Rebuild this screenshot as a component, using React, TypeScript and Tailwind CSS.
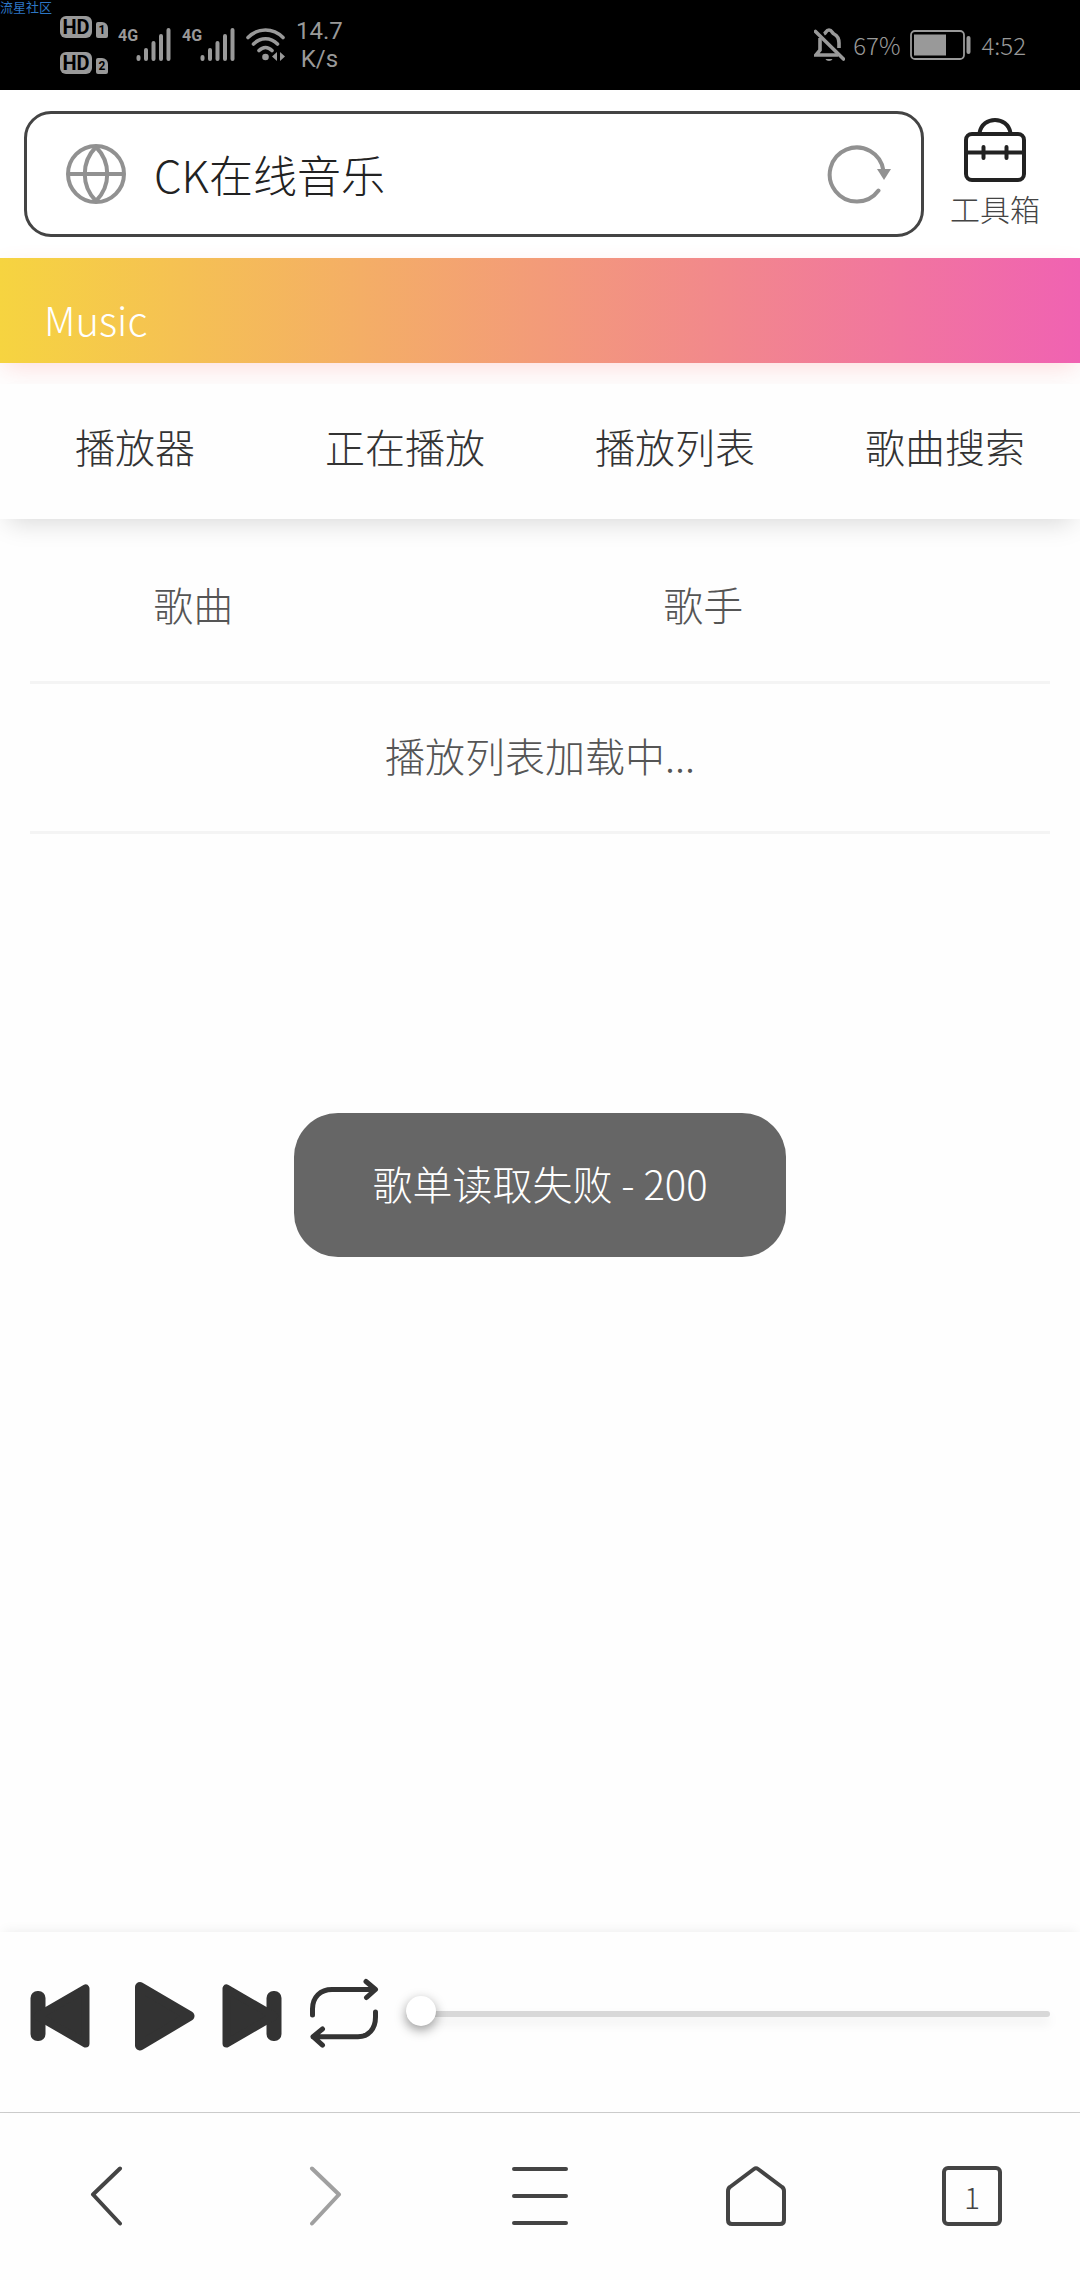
import { useState } from "react";

const tabs = ["播放器", "正在播放", "播放列表", "歌曲搜索"];

function HdBadge({ sim }: { sim: number }) {
  return (
    <div className="flex items-end gap-1">
      <span className="flex h-[22px] w-8 items-center justify-center rounded-md bg-[#999] font-['Roboto'] text-[20px] leading-none font-bold text-black">
        HD
      </span>
      <span className="flex h-4 w-3 items-center justify-center rounded-xs rounded-tr-md bg-[#999] font-['Roboto'] text-[12px] leading-none font-bold text-black">
        {sim}
      </span>
    </div>
  );
}

function Signal() {
  return (
    <div className="flex items-start">
      <span className="w-[18px] font-['Roboto'] text-[16px] leading-4 font-bold">4G</span>
      <svg className="h-[34px] w-9" viewBox="0 0 36 34" stroke="currentColor" strokeWidth="4" strokeLinecap="round">
        <path d="M2.5 29v2M10 22v9M17.5 15v16M25 8v23M32.5 2v29" />
      </svg>
    </div>
  );
}

function StatusBar() {
  return (
    <div className="relative flex h-[90px] items-center justify-between bg-black pr-[54px] pl-[60px] text-[#999]">
      <span className="absolute top-0 left-0 text-[13px] leading-[13px] text-[#2d76c4]">流星社区</span>
      <div className="flex items-center gap-[10px]">
        <div className="flex flex-col gap-[14px]">
          <HdBadge sim={1} />
          <HdBadge sim={2} />
        </div>
        <Signal />
        <Signal />
        <svg className="h-[34px] w-10" viewBox="0 0 40 34" fill="none" stroke="currentColor" strokeWidth="3.6" strokeLinecap="round">
          <path d="M2 9.5C12-.5 27-.5 37 9.5M7.500 16C14.500 9 24.500 9 31.500 16M13 22.500c4-4 9-4 13 0" />
          <circle cx="19.500" cy="29" r="3.300" fill="currentColor" stroke="none" />
          <path d="M31 24v9l-5-4.500zM34 24v9l5-4.500z" fill="currentColor" stroke="none" />
        </svg>
        <div className="text-center font-['Roboto'] text-[24px] leading-7">
          <div>14.7</div>
          <div>K/s</div>
        </div>
      </div>
      <div className="flex items-center gap-[10px] text-[24px] font-light">
        <div className="flex items-center gap-2">
          <svg className="h-[34px] w-[31px]" viewBox="0 0 31 34" fill="none" stroke="currentColor" strokeWidth="3.6">
            <path d="M6 10v12l-4 5h22M10 6c2-1 2-4 5-4s3 3 5 4c4 2 5 5 5 9v5" />
            <path d="M1.500 3.500L29.500 31" strokeLinecap="round" />
            <path d="M11.500 31h7c-1 2.500-6 2.500-7 0z" fill="currentColor" stroke="none" />
          </svg>
          <span>67%</span>
        </div>
        <svg className="h-[30px] w-[61px]" viewBox="0 0 61 30" fill="none">
          <rect x="1" y="1" width="53" height="28" rx="4" stroke="currentColor" strokeWidth="1.800" />
          <rect x="4" y="4.500" width="32" height="21" fill="currentColor" />
          <rect x="56.500" y="6" width="4" height="18" rx="2" fill="currentColor" />
        </svg>
        <span>4:52</span>
      </div>
    </div>
  );
}

function AddressBar() {
  return (
    <div className="flex h-[168px] items-center bg-white pl-6">
      <div className="flex h-[126px] min-w-0 flex-1 items-center gap-7 rounded-[27px] border-3 border-[#444] pr-7 pl-[39px]">
        <svg className="h-[60px] w-[60px] shrink-0" viewBox="0 0 60 60" fill="none" stroke="#919191" strokeWidth="4">
          <circle cx="30" cy="30" r="28" />
          <path d="M2 30h56M30 3c-15 15-15 39 0 54M30 3c15 15 15 39 0 54" />
        </svg>
        <input
          type="text"
          aria-label="地址"
          defaultValue="CK在线音乐"
          className="min-w-0 flex-1 bg-transparent text-[44px] leading-[60px] font-light text-[#222] outline-none"
        />
        <button type="button" aria-label="刷新" className="shrink-0">
          <svg className="h-[60px] w-[66px]" viewBox="0 0 66 60" fill="none">
            <path d="M51.500 46.500A27 27 0 1 1 56.500 27" stroke="#919191" strokeWidth="4" strokeLinecap="round" />
            <path d="M50 25h14l-7 11z" fill="#919191" />
          </svg>
        </button>
      </div>
      <button type="button" className="flex w-[156px] flex-col items-center gap-2 pr-[14px] pb-1">
        <svg className="h-16 w-[62px]" viewBox="0 0 62 64" fill="none" stroke="#222" strokeWidth="4">
          <rect x="2" y="16" width="58" height="46" rx="6" />
          <path d="M15.500 15C17 6 24 2 31 2s14 4 15.500 13M2 34.500h58" />
          <path d="M19.500 29v11M42.500 29v11" strokeLinecap="round" />
        </svg>
        <span className="text-[30px] leading-9 font-light text-[#444]">工具箱</span>
      </button>
    </div>
  );
}

function Player() {
  const [position, setPosition] = useState(0);

  return (
    <div className="flex h-[180px] items-center gap-[27px] bg-[#fefefe] px-[30px] pb-4 text-[#333] shadow-[0_-4px_12px_-4px_rgba(0,0,0,0.08)]">
      <button type="button" aria-label="上一首">
        <svg className="h-[76px] w-[60px]" viewBox="0 0 60 76" fill="currentColor">
          <rect x="0.500" y="15" width="15" height="50" rx="7" />
          <path d="M8 40L55.500 12.500v55z" stroke="currentColor" strokeWidth="8" strokeLinejoin="round" />
        </svg>
      </button>
      <button type="button" aria-label="播放">
        <svg className="h-[76px] w-[78px]" viewBox="0 0 78 76" fill="currentColor">
          <path d="M23 11l49.500 29L23 69.500z" stroke="currentColor" strokeWidth="10" strokeLinejoin="round" />
        </svg>
      </button>
      <button type="button" aria-label="下一首">
        <svg className="h-[76px] w-[60px]" viewBox="0 0 60 76" fill="currentColor">
          <rect x="44.500" y="15" width="15" height="50" rx="7" />
          <path d="M52 40L4.500 12.500v55z" stroke="currentColor" strokeWidth="8" strokeLinejoin="round" />
        </svg>
      </button>
      <button type="button" aria-label="列表循环">
        <svg className="h-[76px] w-[70px]" viewBox="-1 0 70 76" fill="none" stroke="currentColor" strokeWidth="5" strokeLinecap="round" strokeLinejoin="round">
          <path d="M2.500 39v-6c0-12 8-19.500 19.500-19.500h43M56 5.500l9.500 8-9 8" />
          <path d="M65.500 36v5c0 12-7 19.700-17.500 19.700H3M12.500 53L3 60.700l9.500 8.500" />
        </svg>
      </button>
      <input
        type="range"
        aria-label="播放进度"
        min={0}
        max={100}
        value={position}
        onChange={(e) => setPosition(Number(e.target.value))}
        className="h-[30px] min-w-0 flex-1 appearance-none bg-transparent [&::-webkit-slider-runnable-track]:h-[6px] [&::-webkit-slider-runnable-track]:rounded-full [&::-webkit-slider-runnable-track]:bg-[#d8d8d8] [&::-webkit-slider-runnable-track]:shadow-[0_6px_12px_rgba(0,0,0,0.08)] [&::-webkit-slider-thumb]:-mt-[15px] [&::-webkit-slider-thumb]:size-[30px] [&::-webkit-slider-thumb]:appearance-none [&::-webkit-slider-thumb]:rounded-full [&::-webkit-slider-thumb]:bg-white [&::-webkit-slider-thumb]:shadow-[0_4px_12px_rgba(0,0,0,0.4)]"
      />
    </div>
  );
}

function BrowserNav() {
  return (
    <nav className="grid h-[168px] grid-cols-5 items-center justify-items-center border-t border-[#ccc] bg-[#fefefe] pb-[2px] text-[#444]">
      <button type="button" aria-label="后退">
        <svg className="size-[60px]" viewBox="0 0 60 60" fill="none" stroke="currentColor" strokeWidth="4" strokeLinecap="round" strokeLinejoin="round">
          <path d="M42 2.500L15 28.500l27 29" />
        </svg>
      </button>
      <button type="button" aria-label="前进" className="text-[#a0a0a0]">
        <svg className="size-[60px]" viewBox="0 0 60 60" fill="none" stroke="currentColor" strokeWidth="4" strokeLinecap="round" strokeLinejoin="round">
          <path d="M18 2.500l27 26-27 29" />
        </svg>
      </button>
      <button type="button" aria-label="菜单">
        <svg className="size-[60px]" viewBox="0 0 60 60" stroke="currentColor" strokeWidth="4" strokeLinecap="round">
          <path d="M4 3h52M4 30h52M4 57h52" />
        </svg>
      </button>
      <button type="button" aria-label="主页">
        <svg className="size-[60px]" viewBox="0 0 60 60" fill="none" stroke="currentColor" strokeWidth="4" strokeLinejoin="round">
          <path d="M2 25c0-2 .5-3 2-4L28 3q2-1.500 4 0l24 18c1.500 1 2 2 2 4v29q0 4-4 4H6q-4 0-4-4z" />
        </svg>
      </button>
      <button
        type="button"
        aria-label="标签页"
        className="flex size-[60px] items-center justify-center rounded-md border-4 border-[#444] text-[30px] leading-none font-light"
      >
        1
      </button>
    </nav>
  );
}

export default function App() {
  return (
    <div className="flex min-h-screen flex-col bg-[#fefefe] font-['Noto_Sans_CJK_SC',sans-serif]">
      <StatusBar />
      <AddressBar />

      {/* Web page */}
      <div className="relative flex flex-1 flex-col">
        <header className="flex h-[105px] items-center bg-[linear-gradient(to_right,#f6d440,#f062b2)] px-11 pt-4 shadow-[0_8px_24px_-4px_rgba(255,80,80,0.2)]">
          <h1 className="text-[40px] leading-[60px] font-light text-white">Music</h1>
        </header>

        <nav className="relative mt-[21px] grid h-[135px] grid-cols-4 bg-[#fefefe] pb-3 shadow-[0_12px_24px_-8px_rgba(0,0,0,0.15)]">
          {tabs.map((tab) => (
            <button key={tab} type="button" className="text-[40px] leading-[60px] font-light text-[#333]">
              {tab}
            </button>
          ))}
        </nav>

        <main className="flex-1 px-[30px] pt-[13px]">
          <table className="w-full table-fixed border-collapse text-center text-[40px] leading-[60px] text-[#555]">
            <thead>
              <tr className="h-[150px] border-b-3 border-[#f4f4f4]">
                <th className="w-[32%] pb-1 font-light">歌曲</th>
                <th className="pb-1 font-light">歌手</th>
              </tr>
            </thead>
            <tbody>
              <tr className="h-[150px] border-b-3 border-[#f4f4f4]">
                <td colSpan={2} className="pb-1 font-light">播放列表加载中...</td>
              </tr>
            </tbody>
          </table>
        </main>

        <Player />

        {/* Toast */}
        <div className="pointer-events-none absolute inset-0 flex items-center justify-center">
          <div role="status" className="rounded-[44px] bg-[#666] px-[78px] pt-10 pb-11 text-[40px] leading-[60px] font-light text-white">
            歌单读取失败 - 200
          </div>
        </div>
      </div>

      <BrowserNav />
    </div>
  );
}
